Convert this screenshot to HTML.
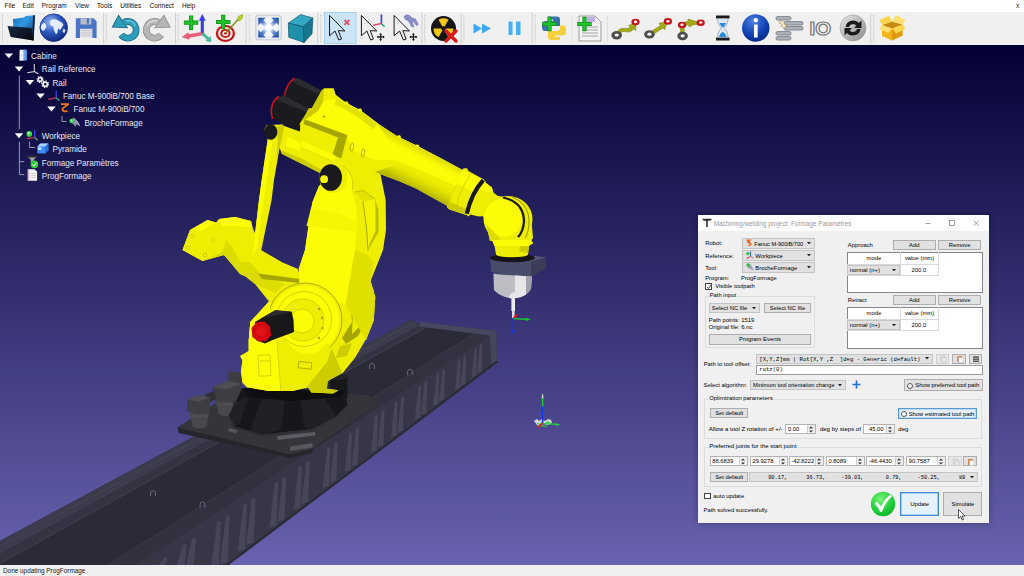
<!DOCTYPE html>
<html lang="en">
<head>
<meta charset="utf-8">
<title>RoboDK - Formage</title>
<style>
*{box-sizing:border-box;margin:0;padding:0}
html,body{width:1024px;height:576px;overflow:hidden;background:#f0f0f0;font-family:"Liberation Sans","DejaVu Sans",sans-serif;color:#111}
.abs{position:absolute}
#menubar{position:absolute;left:0;top:0;width:1024px;height:12px;background:#fff;font-size:6.55px;line-height:12px;color:#111;white-space:nowrap}
#menubar span{position:absolute;top:0}
#toolbar{position:absolute;left:0;top:12px;width:1024px;height:33px;background:#f0f0f0}
#toolbar svg{position:absolute;left:0;top:0}
#view{position:absolute;left:0;top:45px;width:1024px;height:520px;background:linear-gradient(#030134,#6862b0);overflow:hidden}
#status{position:absolute;left:0;top:565px;width:1024px;height:11px;background:#f0f0f0;font-size:6.4px;line-height:11px;color:#222;padding-left:3px;white-space:nowrap}
#tree{position:absolute;left:0;top:0;font-size:8.15px;color:#e8e8f4;white-space:nowrap}
#tree div{position:absolute;height:13px;line-height:13px}
#dlg{position:absolute;left:698px;top:170px;width:291px;height:307.5px;background:#f0f0f0;font-size:5.85px;color:#000;white-space:nowrap;box-shadow:0 0 6px rgba(0,0,20,.35)}
#dlg .title{position:absolute;left:0;top:0;width:291px;height:16px;background:#fff;color:#9a9a9a;font-size:6.42px;line-height:16px}
#dlg .ln{position:absolute;background:#dadada}
#dlg .arw{vertical-align:middle;position:relative;top:-.4px}
#dlg .combo span,#dlg .inp span{white-space:nowrap}
#dlg .t{position:absolute;line-height:9px}
#dlg .btn{position:absolute;background:#e1e1e1;border:1px solid #adadad;text-align:center}
#dlg .combo{position:absolute;background:#e1e1e1;border:1px solid #c4c4c4}
#dlg .inp{position:absolute;background:#fff;border:1px solid #b4b4b4}
#dlg .grp{position:absolute;border:1px solid #dcdcdc}
#dlg .mono{font-family:"Liberation Mono","DejaVu Sans Mono",monospace;font-size:5.6px}
</style>
</head>
<body>
<div id="menubar">
<span style="left:4.5px">File</span><span style="left:22.5px">Edit</span><span style="left:41.700px">Program</span><span style="left:75px">View</span><span style="left:97px">Tools</span><span style="left:120.200px">Utilities</span><span style="left:149.500px">Connect</span><span style="left:182px">Help</span><span style="left:1016px;font-size:6.5px">x</span>
</div>
<div id="toolbar"><svg width="1024" height="33" viewBox="0 12 1024 33">
<defs>
<radialGradient id="gGlobe" cx=".38" cy=".3" r=".8"><stop offset="0" stop-color="#9ab8f0"/><stop offset=".45" stop-color="#2f5cc0"/><stop offset="1" stop-color="#0a2070"/></radialGradient>
<radialGradient id="gInfo" cx=".4" cy=".25" r=".85"><stop offset="0" stop-color="#4a7ae0"/><stop offset=".6" stop-color="#1040b0"/><stop offset="1" stop-color="#06207a"/></radialGradient>
<linearGradient id="gFold" x1="0" y1="0" x2="1" y2="1"><stop offset="0" stop-color="#1a2a48"/><stop offset="1" stop-color="#05070c"/></linearGradient>
<linearGradient id="gSync" x1="0" y1="0" x2="1" y2="1"><stop offset="0" stop-color="#e8e8e8"/><stop offset="1" stop-color="#8a8a8a"/></linearGradient>
<g id="cur"><path d="M0,0V20.4L5.5,15.6L9.3,24.6L12,23.600L8.800,15.200L15.400,15.600Z" fill="none" stroke="#1a1a1a" stroke-width="1" stroke-linejoin="miter"/></g>
<g id="mv" stroke="#111" stroke-width="1.1" fill="#111"><path d="M-2.8,0H2.8M0,-2.8V2.8" fill="none"/><path d="M-4,0l1.700,-1.500v3zM4,0l-1.700,-1.500v3zM0,-4l-1.500,1.700h3zM0,4l-1.500,-1.700h3z" stroke="none"/></g>
<g id="plus"><path d="M0,-7.200V7.200M-7.200,0H7.200" stroke="#0e9416" stroke-width="4.200" fill="none"/><path d="M0,-6.600V6.600M-6.600,0H6.600" stroke="#22c02c" stroke-width="2.600" fill="none"/></g>
</defs>
<g fill="none" stroke="#b8b8b8" stroke-width="1" stroke-dasharray="1 1.2"><path d="M2.5,15V42"/><path d="M106.3,15V42"/><path d="M178.1,15V42"/><path d="M249.3,15V42"/><path d="M320.8,15V42"/><path d="M424.7,15V42"/><path d="M463.9,15V42"/><path d="M535.2,15V42"/><path d="M873.7,15V42"/></g>
<g fill="none" stroke="#d0d0d0" stroke-width="1"><path d="M103.6,13V44"/><path d="M175.5,13V44"/><path d="M246.1,13V44"/><path d="M317.7,13V44"/><path d="M422.0,13V44"/><path d="M461.1,13V44"/><path d="M532.2,13V44"/><path d="M870.7,13V44"/><path d="M572.2,15V42" stroke="#e2e2e2"/><path d="M607.6,15V42" stroke="#dcdcdc"/></g>
<!-- folder -->
<linearGradient id="gFb" x1="0" y1="0" x2="1" y2="1"><stop offset="0" stop-color="#1f6fc0"/><stop offset=".4" stop-color="#2f9ae0"/><stop offset="1" stop-color="#0a2a66"/></linearGradient>
<path d="M12.9,19.1L24,17.6L25.8,16.1L34.9,15.2L33.6,40.4L14,36Z" fill="url(#gFb)"/>
<path d="M33.2,15.4L34.9,15.2L33.6,40.4L32.2,40Z" fill="#0a1020"/>
<path d="M7.5,26L31.6,28L33.2,40.6L10.7,37Z" fill="url(#gFold)"/>
<!-- globe -->
<circle cx="53.7" cy="27.7" r="13.8" fill="url(#gGlobe)" stroke="#1a2f88" stroke-width=".8"/>
<path d="M50.5,20.5Q53,18.500 56.500,19.500L60,21.500Q63,22.500 63.500,25L62,27L60.500,30L58,28.500L57.500,32.500L56,34.500L54.500,31.500Q53,29 53.500,26.500L50.500,25.500Q49.500,23 50.500,20.500ZM41.500,24.500Q43,22.500 45,23L46.500,26.500L45,29.500L43,31L41,29Q40.500,27 41.500,24.500ZM63.500,28.500L65.500,30L64.500,33L62.500,32Z" fill="#f0f4ff" opacity=".93"/>
<!-- floppy -->
<path d="M75.800,18.200H93.500L96.600,21.300V38H75.800Z" fill="#4a74c4"/>
<path d="M80.500,18.600H91.300V24.500H80.500Z" fill="#b8bcc4"/><path d="M86.800,18.600H89V23.600H86.800Z" fill="#4a74c4"/>
<path d="M80,28.800H92.400V38H80Z" fill="#e4e4e8"/><path d="M80.500,30.500H92M80.500,32.300H92M80.500,34.100H92M80.500,35.900H92" stroke="#c0c0c6" stroke-width=".7"/>
<!-- undo -->
<g id="undo">
<path d="M124,22.500 A8.300,8.300 0 1 1 121.200,34.800" stroke="#1a6880" stroke-width="6.800" fill="none"/>
<path d="M118.500,14.600 L111.500,27.400 L128.400,28.200 Z" fill="#1a6880"/>
<path d="M124,22.500 A8.300,8.300 0 1 1 121.200,34.800" stroke="#2c9cba" stroke-width="5.200" fill="none"/>
<path d="M118.600,16.200 L112.800,26.700 L126.800,27.400 Z" fill="#2c9cba"/>
<path d="M125.500,21 A8.300,8.300 0 0 1 135.500,26" stroke="#6cc8dc" stroke-width="1.600" fill="none" opacity=".8"/>
</g>
<!-- redo -->
<g transform="translate(282.400,0) scale(-1,1)">
<path d="M124,22.500 A8.300,8.300 0 1 1 121.200,34.800" stroke="#8e8e8e" stroke-width="6.800" fill="none"/>
<path d="M118.500,14.600 L111.500,27.400 L128.400,28.200 Z" fill="#8e8e8e"/>
<path d="M124,22.500 A8.300,8.300 0 1 1 121.200,34.800" stroke="#b6b6b6" stroke-width="5.200" fill="none"/>
<path d="M118.600,16.200 L112.800,26.700 L126.800,27.400 Z" fill="#b6b6b6"/>
<path d="M125.500,21 A8.300,8.300 0 0 1 135.500,26" stroke="#dcdcdc" stroke-width="1.600" fill="none" opacity=".8"/>
</g>
<!-- add frame -->
<path d="M202.300,14.500 L205.300,20.500 H203.600 V33.400 H201 V20.500 H199.300 Z" fill="#3a3af0" stroke="#2020b0" stroke-width=".4"/>
<path d="M202.300,32.200 L188.500,34.600 L188.200,32.800 L182.400,37 L189.200,39.300 L188.900,37.400 L202.600,35 Z" fill="#f06078" stroke="#c03048" stroke-width=".4"/>
<path d="M201.500,34.300 L207.300,39.600 L206,40.800 L211,41.700 L210.300,36.600 L209,37.900 L203.300,32.600 Z" fill="#40c0a0" stroke="#208868" stroke-width=".4"/>
<use href="#plus" x="191.100" y="22.700"/>
<!-- add target -->
<ellipse cx="225.400" cy="33.400" rx="9.600" ry="8.500" fill="#c81414"/>
<ellipse cx="225.400" cy="33.400" rx="7.300" ry="6.400" fill="#f4eeee"/>
<ellipse cx="225.400" cy="33.400" rx="5.200" ry="4.500" fill="#d01818"/>
<ellipse cx="225.400" cy="33.400" rx="3.100" ry="2.700" fill="#f4eeee"/>
<ellipse cx="225.400" cy="33.400" rx="1.400" ry="1.200" fill="#c81414"/>
<path d="M226,32.800 L238.500,19" stroke="#7a8a18" stroke-width="1.300"/>
<path d="M237,19.200 Q238.500,15 243,14.600 Q243,19 239.300,21.300 Z" fill="#b8d020" stroke="#7a8a18" stroke-width=".4"/>
<use href="#plus" x="223.200" y="22"/>
<!-- fit all -->
<radialGradient id="gFit" cx=".5" cy=".5" r=".6"><stop offset="0" stop-color="#ffffff"/><stop offset="1" stop-color="#e2e7ee"/></radialGradient>
<radialGradient id="gFitA" gradientUnits="userSpaceOnUse" cx="268.500" cy="27.600" r="13"><stop offset=".25" stop-color="#dfe8f6"/><stop offset=".6" stop-color="#5f86cc"/><stop offset="1" stop-color="#1f4ea8"/></radialGradient>
<rect x="255.800" y="15.300" width="25.500" height="24.600" rx="2.500" fill="url(#gFit)" stroke="#bcc2cc" stroke-width=".8"/>
<g fill="url(#gFitA)"><path d="M258.300,17.800H265.800L263.400,20.200L267.300,24.100L264.600,26.800L260.700,22.900L258.300,25.300Z"/><path d="M278.800,17.800H271.300L273.700,20.200L269.800,24.100L272.500,26.800L276.400,22.900L278.800,25.300Z"/><path d="M258.300,37.400H265.800L263.400,35L267.300,31.100L264.600,28.400L260.700,32.300L258.300,29.900Z"/><path d="M278.800,37.400H271.300L273.700,35L269.800,31.100L272.500,28.400L276.400,32.300L278.800,29.900Z"/></g>
<!-- cube -->
<g stroke="#0e5468" stroke-width=".7" stroke-linejoin="round">
<path d="M288.300,23.200L300.600,14.600L312.900,18L303.300,26.700Z" fill="#34a8c2"/>
<path d="M288.300,23.200L303.300,26.700L304.100,42.500L288.800,37.200Z" fill="#1e90aa"/>
<path d="M303.300,26.700L312.900,18L312,33.700L304.100,42.500Z" fill="#15788e"/>
</g>
<!-- selected select tool -->
<rect x="324.500" y="12.500" width="31.500" height="31" fill="#cce4f7" stroke="#a8d0f0" stroke-width="1"/>
<use href="#cur" x="329.500" y="15.400"/>
<path d="M344.400,20L349.400,24.800M349.400,20L344.400,24.800" stroke="#e0506a" stroke-width="1.800"/>
<!-- move frame -->
<use href="#cur" x="361.400" y="15.400"/>
<path d="M381.400,14.500V23.600" stroke="#3a3ae0" stroke-width="1.600"/><path d="M381.400,23.600L373.200,25.200" stroke="#e04868" stroke-width="1.500"/><path d="M381.400,23.600L384.600,26.800" stroke="#20a878" stroke-width="1.600"/>
<use href="#mv" x="380.700" y="36.900"/>
<!-- move tool -->
<use href="#cur" x="394.100" y="15.400"/>
<path d="M404,16.500Q406,13.500 409.500,15.500L412,18L415.500,19L418.300,24.500L416.500,25.500L413.500,21.500L412.500,22.500L414,27L411.500,26.500L408.500,21Q404.500,20 404,16.500Z" fill="#8c8cc4" stroke="#6c6ca8" stroke-width=".5"/>
<use href="#mv" x="413.400" y="36.900"/>
<!-- collision -->
<circle cx="443.500" cy="28.500" r="12.500" fill="#161616"/>
<g fill="#f0c818"><path d="M443.500,28.500L438.500,19.800A10,10 0 0 1 448.500,19.800Z"/><path d="M443.500,28.500L453.500,28.500A10,10 0 0 1 448.500,37.200Z" /><path d="M443.500,28.500L438.500,37.200A10,10 0 0 1 433.500,28.500Z"/></g>
<circle cx="443.500" cy="28.500" r="2.200" fill="#161616"/>
<path d="M446,31L456,41M456,31L446,41" stroke="#d81a1a" stroke-width="3.400" stroke-linecap="round"/>
<!-- fast fwd -->
<path d="M473.500,23.500L482,28.500L473.500,33.500ZM482,23.500L491,28.500L482,33.500Z" fill="#3aa8f4"/>
<!-- pause -->
<path d="M508.500,21.500H512.500V35H508.500ZM516,21.500H520.500V35H516Z" fill="#48b0f4"/>
<!-- python -->
<path d="M548,16.500H557Q560,16.500 560,19.500V26H551Q548,26 548,29V31H545Q542,31 542,27V24Q542,21 546,21H553V19.500H548Z" fill="#3870a8"/>
<path d="M560,40H551Q548,40 548,37V31H557Q560,31 560,28V25.500H563Q566,25.500 566,29.500V32.500Q566,35.500 562,35.500H555V37H560Z" fill="#f4d03c"/>
<use href="#plus" x="549.500" y="24"/>
<!-- add program -->
<path d="M579,16H595L601,22V41H579Z" fill="#f4f4f4" stroke="#8a8a8a" stroke-width=".8"/>
<path d="M587,17H595V22H587Z" fill="#c0b0e8"/>
<path d="M582,27H598M582,30H598M582,33H598M582,36H598" stroke="#9a9a9a" stroke-width=".9"/>
<use href="#plus" x="584.500" y="24"/>
<!-- move J / L / C -->
<path d="M616,33.500 Q619,27.500 624.500,28.300 Q628.500,29.500 630.300,26.800 L628.600,25.500 L636,22.800 L635.800,30.500 L633.700,29 Q630.500,33.300 625,31.600 Q621,30.700 619.300,35 Z" fill="#a2aa18" stroke="#747a0c" stroke-width=".5"/>
<ellipse cx="616.7" cy="35.2" rx="5.300" ry="4.200" fill="#4e4e4e"/><ellipse cx="616.7" cy="35" rx="2.100" ry="1.600" fill="#f4f4f4"/><ellipse cx="635.5" cy="22.1" rx="4.100" ry="3.300" fill="#c01820"/><ellipse cx="635.5" cy="21.9" rx="1.700" ry="1.300" fill="#fbeaea"/>
<path d="M650.500,31.800 L660.500,25.600 L659,23.300 L667.500,21.500 L664.600,29.800 L662.800,28 L652.500,34.800 Z" fill="#a2aa18" stroke="#747a0c" stroke-width=".5"/>
<ellipse cx="649.4" cy="34.4" rx="5.300" ry="4.200" fill="#4e4e4e"/><ellipse cx="649.4" cy="34.2" rx="2.100" ry="1.600" fill="#f4f4f4"/><ellipse cx="667.9" cy="21.4" rx="4.100" ry="3.300" fill="#c01820"/><ellipse cx="667.9" cy="21.2" rx="1.700" ry="1.300" fill="#fbeaea"/>
<path d="M680.500,34 L680.300,26 Q682,22.500 688,21.300 L688,19 L694.500,21 L697.500,21.600 L700,24.300 L694,24.500 L689,27 L688.700,24.600 Q684.500,25.500 684,28 L684.500,34 Z" fill="#a2aa18" stroke="#747a0c" stroke-width=".5"/>
<ellipse cx="682.6" cy="36" rx="5.300" ry="4.200" fill="#4e4e4e"/><ellipse cx="682.6" cy="35.8" rx="2.100" ry="1.600" fill="#f4f4f4"/><ellipse cx="682" cy="25" rx="4.100" ry="3.300" fill="#c01820"/><ellipse cx="682" cy="24.8" rx="1.700" ry="1.300" fill="#fbeaea"/><ellipse cx="700.7" cy="22.7" rx="4.100" ry="3.300" fill="#c01820"/><ellipse cx="700.7" cy="22.5" rx="1.700" ry="1.300" fill="#fbeaea"/>
<!-- hourglass -->
<path d="M716,15.500H729.500V18.500H716ZM716,37.500H729.500V40.500H716Z" fill="#1c1c1c"/>
<path d="M717.500,18.500H728Q728,25 723.800,28Q728,31 728,37.500H717.500Q717.500,31 721.700,28Q717.500,25 717.500,18.500Z" fill="#dce8f4" stroke="#7a8a9a" stroke-width=".6"/>
<path d="M719.500,23H726Q725,26 722.800,27.500Q720.500,26 719.500,23ZM719,37Q720,33 722.800,32Q725.500,33 726.500,37Z" fill="#2a8ad8"/>
<!-- info -->
<circle cx="755.750" cy="28" r="13.700" fill="url(#gInfo)"/>
<circle cx="755.800" cy="20.300" r="2.200" fill="#fff"/><path d="M754,24.500H757.700V37.500H754Z" fill="#fff"/>
<!-- speed bars -->
<g fill="#aab0b8" stroke="#6a7078" stroke-width=".7"><rect x="776" y="16.500" width="15" height="3.600" rx="1.600"/><rect x="784" y="21.500" width="19" height="3.600" rx="1.600"/><rect x="784" y="26.500" width="19" height="3.600" rx="1.600"/><rect x="776" y="31.500" width="15" height="3.600" rx="1.600"/><rect x="776" y="36.500" width="15" height="3.600" rx="1.600"/></g>
<path d="M779,21.500Q784,20 785,25L787,24L784.500,28.500L780.500,26L782.500,25.500Q782,23 779,23.500Z" fill="#f4e8c0" stroke="#8a7a40" stroke-width=".4"/>
<!-- IO -->
<text x="809.500" y="35" font-family="Liberation Sans, sans-serif" font-size="18.500" font-weight="bold" fill="#fff" stroke="#777" stroke-width="1.2" textLength="21.500" lengthAdjust="spacingAndGlyphs">IO</text>
<!-- sync -->
<circle cx="853" cy="28" r="13" fill="url(#gSync)" stroke="#9a9a9a" stroke-width=".6"/>
<path d="M845.500,27Q846.500,20.500 853.500,20.500Q857,20.500 859,23L861.500,20.500V28H854L856.500,25.500Q855,24 853,24Q849.500,24.500 849,27Z" fill="#1a1a1a"/>
<path d="M860.500,29Q859.500,35.500 852.500,35.500Q849,35.500 847,33L844.500,35.500V28H852L849.500,30.500Q851,32 853,32Q856.500,31.500 857,29Z" fill="#1a1a1a"/>
<!-- yellow box -->
<path d="M882,25L892,28.500L902.500,24.500V35.500L892,40.500L882,36Z" fill="#f2b41c"/>
<path d="M892,28.500L902.500,24.500V35.500L892,40.500Z" fill="#e09a10"/>
<path d="M882,25L892,21.500L902.500,24.500L892,28.500Z" fill="#c88a10"/>
<path d="M882,25L879.500,20L889,15.500L892,21.500Z" fill="#fad44a"/><path d="M902.500,24.500L905.500,20L896,15L892,21.500Z" fill="#fce070"/>
<path d="M882,25L879,29L888.500,33L892,28.500Z" fill="#fce070"/><path d="M902.500,24.500L905.500,29L896,33.500L892,28.500Z" fill="#fad44a"/>
</svg>
</div>
<div id="view">
<svg width="1024" height="520" viewBox="0 45 1024 520" style="position:absolute;left:0;top:0" shape-rendering="geometricPrecision">
<polygon points="0,541 411.8,319.5 414,321.5 417.7,325.4 418.9,321.8 496.2,330.7 497.4,361.4 227,565 0,565" fill="#363646" />
<polygon points="0,541 411.8,319.5 417.7,325.4 419.5,326.6 489,335.4 135,565 0,565" fill="#2b2b38" />
<polygon points="0,541 411.8,319.5 417.7,325.4 0,552.5" fill="#3b3b4b" />
<polygon points="0,552.5 417.7,325.4 426,327.4 0,563.5" fill="#333342" />
<path d="M0,552.5 L417.7,325.4 M0,563.5 L426,327.4 M0,546.5 L414.5,322.5" stroke="#474758" stroke-width=".7" fill="none"/>
<polygon points="474,333.5 489,335.4 135,565 108,565" fill="#31313f" />
<path d="M474,333.5 L108,565" stroke="#41414f" stroke-width=".6" fill="none"/>
<polygon points="418.9,321.8 496.2,330.7 489.7,335.6 419.5,326.6" fill="#474860" />
<polygon points="489.7,335.6 496.2,330.7 497.4,361.4 491.5,365.5" fill="#45465c" />
<path d="M479.756,345.801 Q481,342.801 482.244,345.101 L481.68,371.443 L476.96,373.843 Z" fill="#464658"/>
<path d="M474.431,349.387 Q475.688,346.387 476.946,348.687 L476.355,375.44 L471.569,377.84 Z" fill="#464658"/>
<path d="M463.529,356.729 Q464.813,353.729 466.098,356.029 L465.452,383.625 L460.53,386.025 Z" fill="#464658"/>
<path d="M457.978,360.468 Q459.276,357.468 460.574,359.768 L459.9,387.792 L454.91,390.192 Z" fill="#464658"/>
<path d="M442.282,371.038 Q443.619,368.038 444.956,370.338 L444.204,399.576 L439.018,401.976 Z" fill="#464658"/>
<path d="M436.434,374.976 Q437.786,371.976 439.137,374.276 L438.356,403.966 L433.098,406.366 Z" fill="#464658"/>
<path d="M424.461,383.039 Q425.843,380.039 427.224,382.339 L426.382,412.954 L420.975,415.354 Z" fill="#464658"/>
<path d="M418.365,387.145 Q419.761,384.145 421.158,386.445 L420.285,417.531 L414.803,419.931 Z" fill="#464658"/>
<path d="M401.128,398.753 Q402.567,395.753 404.006,398.053 L403.047,430.471 L397.351,432.871 Z" fill="#464658"/>
<path d="M394.706,403.078 Q396.161,400.078 397.616,402.378 L396.625,435.292 L390.848,437.692 Z" fill="#464658"/>
<path d="M381.557,411.933 Q383.045,408.933 384.533,411.233 L383.476,445.164 L377.536,447.564 Z" fill="#464658"/>
<path d="M374.862,416.442 Q376.366,413.442 377.871,415.742 L376.78,450.19 L370.757,452.59 Z" fill="#464658"/>
<path d="M355.932,429.19 Q357.484,426.19 359.035,428.49 L357.849,464.401 L351.591,466.801 Z" fill="#464658"/>
<path d="M348.879,433.94 Q350.448,430.94 352.017,433.24 L350.796,469.696 L344.45,472.096 Z" fill="#464658"/>
<path d="M334.439,443.664 Q336.044,440.664 337.649,442.964 L336.355,480.536 L329.83,482.936 Z" fill="#464658"/>
<path d="M327.086,448.616 Q328.71,445.616 330.333,447.916 L329.002,486.056 L322.385,488.456 Z" fill="#464658"/>
<path d="M306.297,462.616 Q307.972,459.616 309.647,461.916 L308.212,501.663 L301.337,504.063 Z" fill="#464658"/>
<path d="M298.552,467.832 Q300.246,464.832 301.94,467.132 L300.466,507.478 L293.495,509.878 Z" fill="#464658"/>
<path d="M282.694,478.512 Q284.427,475.512 286.161,477.812 L284.607,519.383 L277.439,521.783 Z" fill="#464658"/>
<path d="M274.619,483.95 Q276.373,480.95 278.126,483.25 L276.532,525.445 L269.263,527.845 Z" fill="#464658"/>
<path d="M251.788,499.325 Q253.599,496.325 255.409,498.625 L253.7,542.585 L246.148,544.985 Z" fill="#464658"/>
<path d="M243.282,505.053 Q245.114,502.053 246.946,504.353 L245.194,548.971 L237.536,551.371 Z" fill="#464658"/>
<path d="M225.867,516.782 Q227.742,513.782 229.617,516.082 L227.777,562.045 L219.903,564.445 Z" fill="#464658"/>
<path d="M216.999,522.754 Q218.896,519.754 220.793,522.054 L218.909,565.2 L210.924,567.6 Z" fill="#464658"/>
<path d="M191.926,539.639 Q193.885,536.639 195.845,538.939 L193.835,565.2 L185.539,567.6 Z" fill="#464658"/>
<path d="M182.585,545.93 Q184.567,542.93 186.55,545.23 L184.493,565.2 L176.081,567.6 Z" fill="#464658"/>
<path d="M163.459,558.81 Q165.489,555.81 167.519,558.11 L165.366,565.2 L156.716,567.6 Z" fill="#464658"/>
<path d="M153.72,565.369 Q155.774,562.369 157.829,564.669 L155.627,565.2 L146.856,567.6 Z" fill="#464658"/>
<path d="M126.185,583.912 Q128.308,580.912 130.43,583.212 L128.091,565.2 L118.977,567.6 Z" fill="#464658"/>
<path d="M497.4,361.4 L227,565" stroke="#2a2a36" stroke-width="2" fill="none"/>
<path d="M369.6,369 v-3.2 a2.4,2.4 0 0 1 4.8,0 v3.2" fill="none" stroke="#68687a" stroke-width="1"/>
<path d="M407.6,375 v-3.2 a2.4,2.4 0 0 1 4.8,0 v3.2" fill="none" stroke="#68687a" stroke-width="1"/>
<path d="M150.6,496.25 v-3.2 a2.4,2.4 0 0 1 4.8,0 v3.2" fill="none" stroke="#68687a" stroke-width="1"/>
<path d="M200.1,507.5 v-3.2 a2.4,2.4 0 0 1 4.8,0 v3.2" fill="none" stroke="#68687a" stroke-width="1"/>
<polygon points="177.5,427.5 240,388 367.5,395 380,402.5 312.5,450 312.5,453 290,458 178.75,433" fill="#25252b" />
<polygon points="177.5,427.5 240,388 367.5,395 380,402.5 312.5,449 290,454.5" fill="#34343b" />
<polygon points="277.5,436 315,432 315,435.5 277.5,440" fill="#5c5c64" />
<polygon points="290,446.5 312.5,443 312.5,447.5 290,451" fill="#56565e" />
<polygon points="229,428 238,430.5 236,433.5 228,431" fill="#56565e" />
<polygon points="228.3,373 232,371 240,372.5 242,376 242,386 228.3,384" fill="#3d3d42" />
<polygon points="216.2,401 233.2,400 230.75,413.7 218.6,413.7" fill="#47474c" />
<ellipse cx="224.7" cy="413.7" rx="6.1" ry="2.2" fill="#47474c"/>
<path d="M216.5,404.500 H233" stroke="#5a5a60" stroke-width="1.6" stroke-dasharray="1 1"/>
<polygon points="212.5,387 228.3,381 241.7,383.4 243,396 232,402 215,401.6" fill="#3d3d42" />
<polygon points="212.5,387 228.3,381 241.7,383.4 226,389.5" fill="#4e4e54" />
<polygon points="205,394.5 214,391 216,399 209,403" fill="#2f2f34" />
<polygon points="189.4,412.5 208.9,412 206.5,425.9 192.5,425.9" fill="#47474c" />
<ellipse cx="199.500" cy="425.9" rx="7" ry="2.5" fill="#47474c"/>
<path d="M190,416 H208.500" stroke="#5a5a60" stroke-width="1.6" stroke-dasharray="1 1"/>
<polygon points="187,399.2 199.2,394.9 210.1,397.3 210.1,412.5 200,414 187,411.3" fill="#3d3d42" />
<polygon points="187,399.2 199.2,394.9 210.1,397.3 198,402" fill="#4e4e54" />
<polygon points="330,377.5 338,374 347.5,375.5 347.5,398 338,401 330,398" fill="#17171b" />
<ellipse cx="339" cy="377" rx="8.7" ry="3" fill="#222228"/>
<polygon points="242,388 345,391 347.5,405 336,416 312,429 262,434.5 233,426.5 229,415 236,402" fill="#17171b" />
<polygon points="262,398 285,400 281,430 262,434.5 250,431" fill="#202026" />
<polygon points="300,399 322,395 336,416 312,429 305,428" fill="#202026" />
<polygon points="236,402 248,397 240,424 233,426.5 229,415" fill="#202026" />
<polygon points="242,388 345,391 340,397 290,401 250,397" fill="#0e0e11" />
<path d="M231,420 L234,427 L262,435.5 L312,430 L337,417 L347,406" stroke="#2e2e35" stroke-width="1.6" fill="none"/>
<polygon points="269,301.5 250.3,322 248.75,340 248.75,351 240.2,356 242.5,360.6 241,371.5 242.5,382.5 247.2,387.2 269,391 292.5,391 308,387.2 311.25,392.6 333,393.4 338.6,390.3 326.9,388.75 327.7,381 342.5,373 355,357.5 366,338.75 373.75,320 374,290 300,270" fill="#eeee02" />
<polygon points="269,301.5 250.3,322 248.75,340 248.75,351 240.2,356 242.5,360.6 241,371.5 242.5,382.5 247.2,387.2 269,391 280.8,391 276.9,340.3 285,320" fill="#fcfc06" />
<polygon points="331.5,348 342.5,373 327.7,381 326.9,388.75 338.6,390.3 333,393.4 311.25,392.6 308,387.2 305,388.75 326.9,362" fill="#cccc00" />
<polygon points="340,300 374,290 373.75,320 366,338.75 355,357.5 342.5,373 331.5,348 343,325" fill="#eeee02" />
<polygon points="350,303 369,298 368,318 358,336 346,344 342,338 352,322" fill="#a6a600" />
<polygon points="353,310 365,306 362,324 352,334" fill="#eeee02" />
<polygon points="340,346 352,343 347,356 336,358" fill="#cccc00" />
<polygon points="182.5,250 190,230 207.5,220 216,222.5 219,219 235,217 251,221 252.5,227.5 258,240 261,250 282.5,262.5 298,269 300,290 269,301.5 255,284 245.6,276.5 240,274 232.5,265 224,255 202.5,261" fill="#eeee02" />
<polygon points="190,230 207.5,220 216,222.5 200,232" fill="#fcfc06" />
<polygon points="219,219 235,217 251,221 252.5,227.5 236,226 222,226" fill="#fcfc06" />
<polygon points="182.5,250 190,230 200,232 216,222.5 222,226 226,240 222,252 202.5,261" fill="#eeee02" />
<polygon points="202.5,261 222,252 226,240 232,246 240,262 232.5,265 224,255" fill="#dcdc00" />
<polygon points="240,262 250,262 262,276 285,284 275,293 255,284 245.6,276.5 240,274 232.5,265" fill="#dcdc00" />
<polygon points="258,273.5 300,279 299,283 262,279" fill="#a6a600" />
<circle cx="192" cy="236" r="1.6" fill="#fcfc06" stroke="#a6a600" stroke-width=".5"/>
<circle cx="188" cy="248" r="1.6" fill="#fcfc06" stroke="#a6a600" stroke-width=".5"/>
<circle cx="213" cy="240" r="1.6" fill="#fcfc06" stroke="#a6a600" stroke-width=".5"/>
<circle cx="205" cy="255" r="1.6" fill="#fcfc06" stroke="#a6a600" stroke-width=".5"/>
<polygon points="319,186 312.6,201.7 310.5,212 305,250 298.75,268.75 300,290 330,300 345.6,304.7 366,340 373.75,320 375.3,297 370.6,281 383,250 386,230 385.7,200 380,172 350,168" fill="#eeee02" />
<polygon points="319,186 312.6,201.7 310.5,212 305,250 298.75,268.75 300,290 330,300 345.6,304.7 355,250 357,222 356,205 349,182.5 335,172" fill="#fcfc06" />
<polygon points="311,208 340,214 357,222 356.5,232 306.5,226" fill="#f6f604" />
<polygon points="363,201.7 375,199 378.5,210 378.5,232 368,250.5 366.5,228" fill="#f4f400" />
<polygon points="375,199 378.5,210 378.5,232 368,250.5 369.5,244 375.5,231 375.5,211" fill="#bcbc00" />
<path d="M363,201.7 L366.5,228 L368,250.5" stroke="#a8a800" stroke-width="1" fill="none"/>
<polygon points="354.5,192 363,190.5 375,199 363,201.7" fill="#e2e200" />
<path d="M354.5,192 L363,190.5 L375,199" stroke="#b4b400" stroke-width=".8" fill="none"/>
<polygon points="345.6,304.7 355,250 367.5,255 374,262 370.6,281 375.3,297 373.75,320 366,340" fill="#e0e000" />
<circle cx="305" cy="320" r="37" fill="#eeee02" stroke="#a6a600" stroke-width=".9"/>
<circle cx="305" cy="320" r="34.5" fill="#fcfc06"/>
<circle cx="304" cy="319" r="27.5" fill="#fcfc06" stroke="#cccc00" stroke-width=".9"/>
<circle cx="303" cy="320" r="21" fill="#eeee02" stroke="#cccc00" stroke-width=".8"/>
<circle cx="302" cy="321" r="12" fill="#fcfc06" stroke="#cccc00" stroke-width=".8"/>
<polygon points="269,301.5 250.3,322 248.75,340 248.75,351 247,370 262,375 276.9,360 276.9,340.3 272,320" fill="#fcfc06" />
<polygon points="276.9,340.3 283,337 293,349 305,354.4 318,352 327,343 331.5,348 326.9,362 305,388.75 308,387.2 292.5,391 280.8,391" fill="#eeee02" />
<path d="M276.9,340.3 L280.8,390.5" stroke="#cccc00" stroke-width=".7"/>
<circle cx="319" cy="309" r="1.2" fill="#a6a600"/>
<circle cx="322" cy="318" r="1.2" fill="#a6a600"/>
<circle cx="322.5" cy="328" r="1.2" fill="#a6a600"/>
<circle cx="319" cy="338" r="1.2" fill="#a6a600"/>
<polygon points="255,322 260.5,318.75 275.3,310.2 291.7,311.7 293.5,320 294,332 272,340.3 265,343.4 256,340" fill="#18181b" />
<polygon points="260.5,318.75 275.3,310.2 291.7,311.7 278,315" fill="#2a2a2e" />
<polygon points="257,322 264,321.5 270,326.5 271,335.5 266,341 258.5,341.5 252.5,337 251.5,328" fill="#d20a10" />
<circle cx="261" cy="331.5" r="5" fill="#e0141a"/>
<rect x="258.5" y="355" width="12" height="21" fill="none" stroke="#cccc00" stroke-width=".8" transform="rotate(-3 264 365)"/>
<path d="M260,361 H270" stroke="#a6a600" stroke-width="1.2" stroke-dasharray="1.2 1.2"/>
<rect x="298.5" y="362" width="13" height="6.500" fill="none" stroke="#a6a600" stroke-width=".8" transform="rotate(6 305 365)"/>
<polygon points="293.5,78.7 298.5,78.3 321.6,90.6 312,108 308.5,108.75 284.75,95.6 287,86" fill="#1b1b1f" />
<polygon points="293.5,78.7 298.5,78.3 321.6,90.6 318,94 292,82" fill="#2b2b30" />
<path d="M294.5,78.2 Q286,84 284.5,96" stroke="#d0121a" stroke-width="1.6" fill="none"/>
<polygon points="277.9,96.9 284.75,95.6 308.5,108.75 306,113.75 299,125 301,131.9 272.9,118.75 269.9,111" fill="#1b1b1f" />
<polygon points="277.9,96.9 284.75,95.6 308.5,108.75 306,112 277,100" fill="#2b2b30" />
<path d="M278.5,96.5 Q268.5,104 272.5,119" stroke="#d0121a" stroke-width="1.6" fill="none"/>
<polygon points="280,124.6 301.25,131.9 300.5,146.7 334,161.5 322,174 281.7,153.8 279,146" fill="#eeee02" />
<polygon points="287.2,136.6 301.25,142.8 300.5,151 286,146" fill="#fcfc06" />
<polygon points="281.7,150.6 300.5,158 322,170 322,174 281.7,153.8" fill="#cccc00" />
<polygon points="264.5,129 267,125 282.5,124.6 284.3,127 279.4,149 274,180 271.6,200 261.3,250 256,267 252.5,255 259,200 261.7,180 267.7,139.7" fill="#eeee02" />
<polygon points="267.7,139.7 272.5,141 266.5,180 263.8,200 256.5,250 252.5,255 259,200 261.7,180" fill="#fcfc06" />
<polygon points="276,127 282.5,124.6 284.3,127 279.4,149 276.5,160 278,140" fill="#cccc00" />
<polygon points="321.6,90.6 324,88.6 333.5,88.6 335.4,94.4 345,102 347.5,101.5 349,104.5 358,109 360.5,108.5 362,111.5 380,125 396.6,136 417.5,146 462.5,170 447.5,206 416,188.5 400,181.5 374.75,172 365,176.5 351,181 346,171 341.2,158.4 334,161.5 300.5,146.7 299.75,135 300.4,123.75 299,125 306,113.75 308.5,108.75 312,108" fill="#eeee02" />
<polygon points="323.5,101 336,98 345,102 360,110 380,125 396.6,136 417.5,146 462.5,170 456,186 420,170 395,160 375,160 352,150 346.6,135 305,120" fill="#fcfc06" />
<polygon points="321.6,90.6 324,88.6 323.5,101 318,111 305,120 299,125 306,113.75 308.5,108.75 312,108" fill="#cccc00" />
<polygon points="324,88.6 333.5,88.6 335.4,94.4 336,98 323.5,101" fill="#eeee02" />
<defs><linearGradient id="gTop" gradientUnits="userSpaceOnUse" x1="430" y1="152.5" x2="425.5" y2="161.5"><stop offset="0" stop-color="#d8d800" stop-opacity="1"/><stop offset="1" stop-color="#e8e800" stop-opacity="0"/></linearGradient><linearGradient id="gBot" gradientUnits="userSpaceOnUse" x1="416" y1="188.5" x2="423" y2="174.500"><stop offset="0" stop-color="#b8b800" stop-opacity="1"/><stop offset="1" stop-color="#dcdc00" stop-opacity="0"/></linearGradient></defs>
<polygon points="336,98 345.6,103.3 359.7,110.3 376.9,123.6 373.5,129.5 356,115.5 343,108.5 334.5,104.5" fill="#e2e200" />
<polygon points="376.9,123.6 398.75,136.9 417.5,146.25 439.4,157.2 462.5,170 457,184 430,170 405,156 392,145" fill="url(#gTop)" />
<polygon points="374.75,172 400,181.5 416,188.5 447.5,206 455,188 420,170 398,164" fill="url(#gBot)" />
<ellipse cx="345.9" cy="103.2" rx="2" ry="1.600" fill="#eeee02"/>
<ellipse cx="345.6" cy="102.9" rx="1.300" ry="1" fill="#fcfc06"/>
<ellipse cx="360" cy="110.2" rx="2" ry="1.600" fill="#eeee02"/>
<ellipse cx="359.7" cy="109.9" rx="1.300" ry="1" fill="#fcfc06"/>
<ellipse cx="399.05" cy="136.9" rx="2" ry="1.600" fill="#eeee02"/>
<ellipse cx="398.75" cy="136.6" rx="1.300" ry="1" fill="#fcfc06"/>
<ellipse cx="417.3" cy="146.1" rx="2" ry="1.600" fill="#eeee02"/>
<ellipse cx="417" cy="145.8" rx="1.300" ry="1" fill="#fcfc06"/>
<polygon points="302.9,120.2 306.6,120 347.25,135 341.2,158.4 334,161.5 300.5,146.7 300.4,123.75" fill="#eeee02" />
<polygon points="304,120.5 306.6,120 347.25,135 346.3,139 338,137.5 303.5,124" fill="#a6a600" />
<polygon points="338,137.5 346.3,139 341.2,158.4 336,156.2 332.6,154.5" fill="#a6a600" />
<polygon points="300.9,140.5 332.6,154.5 336,156.2 334,161.5 300.5,146.7" fill="#fcfc06" />
<ellipse cx="352" cy="147" rx="1.6" ry="4.2" fill="none" stroke="#a6a600" stroke-width=".8" transform="rotate(8 352 147)"/>
<ellipse cx="363" cy="153" rx="1.6" ry="4.2" fill="none" stroke="#a6a600" stroke-width=".8" transform="rotate(8 363 153)"/>
<circle cx="324" cy="116.5" r="1" fill="#8c8c00"/>
<ellipse cx="270.8" cy="132" rx="6.5" ry="7.8" fill="#1a1a1e"/>
<polygon points="333,161 341.2,158 352,172 340,170 332,165" fill="#eeee02" />
<polygon points="330.2,163.1 335.6,163.3 342.5,165.8 348.1,170.5 351.7,176.8 353,184 352.3,189.4 340,196 320,184 322,171" fill="#fcfc06" />
<path d="M330.2,163.1 L335.6,163.3 L342.5,165.8 L348.1,170.5 L351.7,176.8 L353,184 L352.3,189.4" fill="none" stroke="#cccc00" stroke-width="1"/>
<ellipse cx="333.500" cy="177.500" rx="14" ry="15.5" fill="#eeee02"/>
<ellipse cx="330.7" cy="177.5" rx="11.3" ry="13.3" fill="#1a1a1e"/>
<circle cx="324.1" cy="179.2" r="3.9" fill="#fcfc06"/>
<polygon points="461.9,170.6 463.5,168.3 467,168.3 468.5,171 483.75,179.4 486,182 478,200 469,216.5 466.25,215 449.5,209.5 447,207.5 447.5,205.6" fill="#eeee02" />
<polygon points="461.9,170.6 483.75,179.4 477,193 456.5,184" fill="#fcfc06" />
<polygon points="449,201.5 470,210.5 466.25,215 449.5,209.5 447,207.5" fill="#cccc00" />
<path d="M470.500,174 Q461,188 456.500,206" stroke="#cccc00" stroke-width=".8" fill="none"/>
<polygon points="484,181.5 491.9,187.5 494.5,196 490,208 481,216.5 477.5,216.25 468,214" fill="#eeee02" />
<polygon points="484,181.5 491.9,187.5 493,193 480,190" fill="#fcfc06" />
<path d="M483.300,180.200 Q471.500,193 466.800,213.800" stroke="#1a1a1e" stroke-width="4.200" fill="none"/>
<polygon points="490,190 498,196 506,197 495,228 480,214" fill="#eeee02" />
<ellipse cx="508" cy="219" rx="24.5" ry="23" fill="#eeee02"/>
<polygon points="486,222 531,215 533,238 531,241 490,241" fill="#eeee02" />
<ellipse cx="503" cy="218" rx="19" ry="19" fill="#fcfc06"/>
<polygon points="486,224 500,238 498,241 490,241" fill="#dcdc00" />
<path d="M503,197.5 Q524,202 524,222 Q523,232 518,237" stroke="#1a1a1e" stroke-width="2.300" fill="none"/>
<path d="M512,197 Q530,204 529,224 Q528,234 525,238" stroke="#a6a600" stroke-width="1.2" fill="none"/>
<polygon points="492,240 531,240 533,243 529,246 528,254 496,254 494.5,246" fill="#eeee02" />
<polygon points="492,240 531,240 533,243 529,246 494.5,246" fill="#fcfc06" />
<polygon points="520,246 529,246 528,254 519,254" fill="#cccc00" />
<ellipse cx="512" cy="254" rx="16" ry="2.6" fill="#eeee02"/>
<polygon points="490.3,259 512,262 535,260.5 546,257.3 545.5,268.5 531,276.5 500,274.5 491,271.5" fill="#4a4c6c" />
<polygon points="531,261.5 546,257.3 545.5,268.5 531,276.5" fill="#3a3c58" />
<polygon points="490.3,259 512,262 531,261.5 546,257.3 535,256 512.6,261.4 492,258" fill="#565878" />
<ellipse cx="512.6" cy="258" rx="22.4" ry="4.2" fill="#15151a"/>
<ellipse cx="512" cy="254.6" rx="16" ry="2.6" fill="#eeee02"/>
<path d="M493.4,273.5 L494,290 Q500,297 512.5,298.5 Q526,297 531,289 L532,276.5 L500,274.5 Z" fill="#bdbdc4"/>
<path d="M515,275.5 L515,292 Q509,293 509,298 L512.5,298.5 Q522,298 526,294.5 L526,276.2 Z" fill="#e6e6ea"/>
<path d="M526,276.2 L526,294.5 Q529.5,292 531,289 L532,276.5 Z" fill="#a2a2ac"/>
<rect x="511.4" y="298" width="3.6" height="13" fill="#ececf0"/>
<rect x="512" y="310" width="2.6" height="8" fill="#dcdce4"/>
<line x1="513.3" y1="318" x2="513.3" y2="330.38" stroke="#1133ee" stroke-width="1.4"/><polygon points="513.3,335.5 511.7,330.38 514.9,330.38" fill="#1133ee" />
<line x1="513.3" y1="318.6" x2="525.888" y2="319.311" stroke="#18c830" stroke-width="1.4"/><polygon points="531,319.6 525.798,320.909 525.978,317.714" fill="#18c830" />
<line x1="513.3" y1="318" x2="515.354" y2="316.222" stroke="#e01818" stroke-width="1.6"/><polygon points="518.5,313.5 516.205,317.205 514.504,315.239" fill="#e01818" />
<path d="M534,421 l3,-2 l2,2 l3,-2 l3,2 l3,-2 l3,1 l1,3 l-4,2 l-5,-1 l-5,2 z" fill="#e8e8e8" opacity=".9"/>
<path d="M537,423 l3,1.500 l2,-2 M545,424 l3,-2.500 l2.500,2 M539,426.500 l4,-1 l4,1.500" stroke="#30d048" stroke-width="1.100" fill="none"/>
<line x1="542.6" y1="423" x2="542.6" y2="398.8" stroke="#20d040" stroke-width="1.3"/><polygon points="542.6,394 544.1,398.8 541.1,398.8" fill="#20d040" />
<line x1="542.6" y1="394" x2="542.6" y2="398" stroke="#dddddd" stroke-width="1"/>
<line x1="542.6" y1="423" x2="542.6" y2="410.62" stroke="#1133ee" stroke-width="1.5"/><polygon points="542.6,405.5 544.2,410.62 541,410.62" fill="#1133ee" />
<line x1="542.6" y1="423.3" x2="555.717" y2="424.399" stroke="#20d040" stroke-width="1.3"/><polygon points="560.5,424.8 555.592,425.894 555.842,422.904" fill="#20d040" />
<line x1="542.6" y1="423" x2="540.048" y2="425.369" stroke="#e01818" stroke-width="1.6"/><polygon points="537,428.2 539.164,424.417 540.933,426.322" fill="#e01818" />
</svg>
<div id="tree"><svg width="200" height="150" viewBox="0 45 200 150" style="position:absolute;left:0;top:0">
<g stroke="#9a9aa8" stroke-width="1" fill="none">
<path d="M19.300,75.500 V129"/>
<path d="M19.400,141.800 V174.600 H24.200 M19.400,161.700 H24.200"/>
<path d="M29.600,141.800 V147.500 H35"/>
<path d="M62,116 V121.500 H66.500"/>
</g>
<polygon points="4.7,53.4 13.1,53.4 8.9,58.3" fill="#fff"/>
<polygon points="14.8,66.6 23.2,66.6 19,71.5" fill="#fff"/>
<polygon points="25.7,80 34.1,80 29.9,84.9" fill="#fff"/>
<polygon points="36.4,93.5 44.8,93.5 40.6,98.4" fill="#fff"/>
<polygon points="47.3,106.6 55.7,106.6 51.5,111.5" fill="#fff"/>
<polygon points="14.8,133.3 23.2,133.3 19,138.2" fill="#fff"/>
<defs><linearGradient id="gcab" x1="0" x2="1"><stop offset="0" stop-color="#f4f8ff"/><stop offset=".45" stop-color="#dbe8fa"/><stop offset=".6" stop-color="#7ab0ee"/><stop offset="1" stop-color="#3f84dc"/></linearGradient></defs><path d="M19.6,50.600 Q19.600,49.700 20.500,49.700 L26.200,49.500 Q27,49.500 27,50.400 L27,59.800 Q27,60.600 26.200,60.600 L19.400,60.800 Z" fill="url(#gcab)"/>
<g stroke="#d8d8d8" stroke-width="1.1" fill="none"><path d="M34.300,64 V71.500 L27.200,72.800"/><path d="M34.300,71.500 L38.200,73.800"/></g>
<g fill="none" stroke="#f2f2f2"><circle cx="40.1" cy="79.5" r="1.900" stroke-width="1.700"/><circle cx="40.1" cy="79.5" r="3" stroke-width="1.200" stroke-dasharray="1.100 1.250"/><circle cx="45.2" cy="84.2" r="2.100" stroke-width="1.800"/><circle cx="45.2" cy="84.2" r="3.300" stroke-width="1.300" stroke-dasharray="1.200 1.390"/></g>
<g stroke-width="1.2" fill="none"><path d="M56.200,90.500 V97.800" stroke="#3a48f0"/><path d="M56.200,97.800 L48.100,99.300" stroke="#d83060"/><path d="M56.200,97.800 L59.500,100.700" stroke="#30b070"/></g>
<path d="M60.800,104.200 H68.200 L62.400,108.600 Q62.600,112.600 67.400,110.800" fill="none" stroke="#e87818" stroke-width="1.800" stroke-linejoin="round"/>
<path d="M70.500,119.500 L73.500,118 L77.500,121.500 L79.800,126 L76.800,124.200 L75.500,126.500 L72.500,123.500 Z" fill="#8a90a8"/><path d="M73.500,118 L77.500,121.500 L79.800,126" stroke="#d8d8e0" stroke-width=".7" fill="none"/><circle cx="71.700" cy="121" r="2.300" fill="#38d848"/><circle cx="71.300" cy="120.500" r="1" fill="#b0ffb8"/>
<g stroke-width="1.2" fill="none"><path d="M34.700,130 V137.500" stroke="#3a48f0"/><path d="M34.700,137.500 L26.900,138.600" stroke="#d83048"/><path d="M34.700,137.500 L37.700,140.200" stroke="#50b080"/></g><circle cx="29.300" cy="133.900" r="2.800" fill="#38d840"/><circle cx="28.700" cy="133.100" r="1.200" fill="#b8ffb8"/>
<path d="M37.300,146.500 L40.500,143.400 L48.300,143.400 L48.300,150.300 L45.200,153.500 L37.300,153.500 Z" fill="#3a8cf0"/><path d="M37.300,146.500 L40.500,143.400 L48.300,143.400 L45.200,146.500 Z" fill="#a8d2ff"/><path d="M45.200,146.500 L48.300,143.400 L48.300,150.300 L45.200,153.500 Z" fill="#2a70d8"/><path d="M38,147.300 H41.500 V150 H38Z" fill="#d8ecff" opacity=".8"/>
<path d="M27.400,156 H37.100 L33.800,160 V163.500 H30.800 V160 Z" fill="#a0a0a0"/><path d="M27.400,155.800 H37.100 L36,157.600 H28.600Z" fill="#303030"/><circle cx="34.400" cy="164.400" r="3.800" fill="#28d038"/><path d="M32.500,164.500 L34,166.200 L36.500,162.600" stroke="#fff" stroke-width="1" fill="none"/>
<path d="M27.800,169.200 H34.600 L37.100,171.800 V180.800 H27.800 Z" fill="#f6f2ee"/><path d="M27.800,169.200 H29.300 V180.800 H27.800Z" fill="#d0b8d8"/><path d="M30.500,173.500 H36 M30.500,175.500 H36 M30.500,177.500 H36" stroke="#c8b8b8" stroke-width=".6"/>
</svg>
<div style="left:31px;top:5.1px">Cabine</div>
<div style="left:41.8px;top:18.3px">Rail Reference</div>
<div style="left:52.5px;top:31.7px">Rail</div>
<div style="left:62.9px;top:45.2px">Fanuc M-900iB/700 Base</div>
<div style="left:73.5px;top:58.3px">Fanuc M-900iB/700</div>
<div style="left:84.4px;top:71.8px">BrocheFormage</div>
<div style="left:41.8px;top:85px">Workpiece</div>
<div style="left:52.5px;top:98.4px">Pyramide</div>
<div style="left:41.8px;top:111.6px">Formage Paramètres</div>
<div style="left:41.8px;top:125px">ProgFormage</div></div>
<div id="dlg"><div class="title"><svg width="10" height="10" viewBox="0 0 10 10" style="position:absolute;left:4px;top:3px"><path d="M0.5,0.8H9.5V2H6.2L5.8,3.2V9H4.2V3.2L3.8,2H0.5Z" fill="#333"/><path d="M1.5,2.6H8.5" stroke="#333" stroke-width=".8"/></svg><span style="position:absolute;left:15.7px;top:0.9px">Machining/welding project: Formage Paramètres</span><svg width="60" height="16" viewBox="0 0 60 16" style="position:absolute;left:222px;top:0"><g stroke="#8a8a8a" stroke-width=".8" fill="none"><path d="M5.5,8.5H10.5"/><rect x="29.5" y="5.5" width="5" height="5"/><path d="M53.8,5.8l5,5m0,-5l-5,5"/></g></svg></div>
<div class="t" style="left:7.2px;top:24.3px;">Robot:</div>
<div class="combo" style="left:43.7px;top:23.0px;width:72.9px;height:10.9px;line-height:9.7px;"><span style="position:absolute;left:3px;top:0"><svg width="7" height="8" viewBox="0 0 7 8" style="vertical-align:-1.5px"><path d="M0.5,0.5H5.5L3.5,3Q6,3.5 5.5,6L3,7.5L2,6.3L4,5.5Q4,4.2 1.5,4.2Z" fill="#e86a20"/></svg> <span style="font-size:5.6px">Fanuc M-900iB/700</span></span><span style="position:absolute;right:3px;top:0"><svg class="arw" width="4" height="2.4" viewBox="0 0 5 3"><path d="M0,0H5L2.5,3Z" fill="#222"/></svg></span></div>
<div class="t" style="left:7.2px;top:37.1px;">Reference:</div>
<div class="combo" style="left:43.7px;top:35.1px;width:72.9px;height:10.9px;line-height:9.7px;"><span style="position:absolute;left:3px;top:0"><svg width="8" height="8" viewBox="0 0 8 8" style="vertical-align:-1.5px"><path d="M4.5,0.5V5.5" stroke="#3050ff" stroke-width="1"/><path d="M4.5,5.5L0.5,7.5" stroke="#e02020" stroke-width="1"/><path d="M4.5,5.5L7.5,7" stroke="#888" stroke-width="1"/><circle cx="1.8" cy="2.6" r="1.7" fill="#30c040"/></svg> Workpiece</span><span style="position:absolute;right:3px;top:0"><svg class="arw" width="4" height="2.4" viewBox="0 0 5 3"><path d="M0,0H5L2.5,3Z" fill="#222"/></svg></span></div>
<div class="t" style="left:7.2px;top:48.9px;">Tool:</div>
<div class="combo" style="left:43.7px;top:47.3px;width:72.9px;height:10.9px;line-height:9.7px;"><span style="position:absolute;left:3px;top:0"><svg width="8" height="8" viewBox="0 0 8 8" style="vertical-align:-1.5px"><path d="M1,1L4,0.8L6.5,4.5L7.8,7.8L4.5,6L2,5Z" fill="#9aa0b0"/><circle cx="2" cy="2" r="1.7" fill="#30c040"/></svg> BrocheFormage</span><span style="position:absolute;right:3px;top:0"><svg class="arw" width="4" height="2.4" viewBox="0 0 5 3"><path d="M0,0H5L2.5,3Z" fill="#222"/></svg></span></div>
<div class="t" style="left:7.2px;top:58.9px;">Program:</div>
<div class="t" style="left:43.0px;top:58.9px;">ProgFormage</div>
<div class="inp" style="left:7.2px;top:68.0px;width:7.0px;height:6.8px;border-color:#444"><svg width="6" height="6" viewBox="0 0 6 6" style="position:absolute;left:-.2px;top:-.2px"><path d="M1,3L2.4,4.5L5,1.2" stroke="#222" stroke-width=".9" fill="none"/></svg></div>
<div class="t" style="left:17.2px;top:67.2px;">Visible toolpath</div>
<div class="grp" style="left:7.2px;top:81.0px;width:109.4px;height:52.3px;"></div>
<div class="t" style="left:10.5px;top:76.0px;background:#f0f0f0;padding:0 1.2px">Path input</div>
<div class="combo" style="left:10.8px;top:87.7px;width:51.7px;height:10.6px;line-height:9.4px;"><span style="position:absolute;left:2px;top:0">Select NC file</span><span style="position:absolute;right:3px;top:0"><svg class="arw" width="4" height="2.4" viewBox="0 0 5 3"><path d="M0,0H5L2.5,3Z" fill="#222"/></svg></span></div>
<div class="btn" style="left:65.9px;top:87.7px;width:47.1px;height:10.6px;line-height:9.6px;">Select NC file</div>
<div class="t" style="left:10.8px;top:101.2px;">Path points: 1519</div>
<div class="t" style="left:10.8px;top:108.2px;">Original file: 6.nc</div>
<div class="btn" style="left:11.1px;top:119.0px;width:101.9px;height:10.6px;line-height:9.6px;">Program Events</div>
<div class="t" style="left:149.8px;top:26.2px;">Approach</div>
<div class="btn" style="left:195.0px;top:24.5px;width:42.6px;height:10.9px;line-height:9.9px;">Add</div>
<div class="btn" style="left:240.3px;top:24.5px;width:42.6px;height:10.9px;line-height:9.9px;">Remove</div>
<div class="inp" style="left:148.5px;top:36.6px;width:136.2px;height:41.4px;border-color:#828790"></div>
<div class="ln" style="left:202.3px;top:37.2px;width:0.5px;height:23.4px;"></div>
<div class="ln" style="left:240.3px;top:37.2px;width:0.5px;height:23.4px;"></div>
<div class="ln" style="left:149.1px;top:49.1px;width:91.7px;height:0.5px;"></div>
<div class="ln" style="left:149.1px;top:60.4px;width:91.7px;height:0.5px;"></div>
<div class="t" style="left:175.9px;top:38.9px;transform:translateX(-50%)">mode</div>
<div class="t" style="left:221.5px;top:38.9px;transform:translateX(-50%)">value (mm)</div>
<div class="combo" style="left:149.3px;top:49.9px;width:52.6px;height:10.4px;line-height:9.2px;"><span style="position:absolute;left:1.5px;top:0">normal (n+)</span><span style="position:absolute;right:3px;top:0"><svg class="arw" width="4" height="2.4" viewBox="0 0 5 3"><path d="M0,0H5L2.5,3Z" fill="#222"/></svg></span></div>
<div class="t" style="left:220.9px;top:51.1px;transform:translateX(-50%)">200.0</div>
<div class="t" style="left:149.8px;top:81.2px;">Retract</div>
<div class="btn" style="left:195.0px;top:79.5px;width:42.6px;height:10.9px;line-height:9.9px;">Add</div>
<div class="btn" style="left:240.3px;top:79.5px;width:42.6px;height:10.9px;line-height:9.9px;">Remove</div>
<div class="inp" style="left:148.5px;top:91.6px;width:136.2px;height:42.0px;border-color:#828790"></div>
<div class="ln" style="left:202.3px;top:92.2px;width:0.5px;height:23.4px;"></div>
<div class="ln" style="left:240.3px;top:92.2px;width:0.5px;height:23.4px;"></div>
<div class="ln" style="left:149.1px;top:104.1px;width:91.7px;height:0.5px;"></div>
<div class="ln" style="left:149.1px;top:115.4px;width:91.7px;height:0.5px;"></div>
<div class="t" style="left:175.9px;top:93.9px;transform:translateX(-50%)">mode</div>
<div class="t" style="left:221.5px;top:93.9px;transform:translateX(-50%)">value (mm)</div>
<div class="combo" style="left:149.3px;top:104.9px;width:52.6px;height:10.4px;line-height:9.2px;"><span style="position:absolute;left:1.5px;top:0">normal (n+)</span><span style="position:absolute;right:3px;top:0"><svg class="arw" width="4" height="2.4" viewBox="0 0 5 3"><path d="M0,0H5L2.5,3Z" fill="#222"/></svg></span></div>
<div class="t" style="left:220.9px;top:106.1px;transform:translateX(-50%)">200.0</div>
<div class="t" style="left:5.7px;top:145.0px;">Path to tool offset:</div>
<div class="combo" style="left:58.3px;top:138.5px;width:176.9px;height:10.6px;line-height:9.4px;"><span style="position:absolute;left:2px;top:0"><span class="mono">[X,Y,Z]mm | Rot[X,Y ,Z&nbsp; ]deg - Generic (default)</span></span><span style="position:absolute;right:3px;top:0"><svg class="arw" width="4" height="2.4" viewBox="0 0 5 3"><path d="M0,0H5L2.5,3Z" fill="#222"/></svg></span></div>
<div class="btn" style="left:237.6px;top:138.5px;width:13.7px;height:10.6px;line-height:9.6px;border-color:#d0d0d0;background:#e8e8e8"><svg width="8" height="8" viewBox="0 0 8 8" style="position:absolute;left:2.6px;top:.8px"><rect x="1.5" y="1" width="4" height="5" fill="none" stroke="#c4c4c4" stroke-width=".7"/><rect x="3" y="2.5" width="4" height="5" fill="#e8e8e8" stroke="#c4c4c4" stroke-width=".7"/></svg></div>
<div class="btn" style="left:254.3px;top:138.5px;width:13.7px;height:10.6px;line-height:9.6px;"><svg width="8" height="8" viewBox="0 0 8 8" style="position:absolute;left:2.6px;top:.8px"><path d="M1,1H6V7H1Z" fill="#d8874a"/><path d="M2.6,2.4H7V7.6H2.6Z" fill="#fafafa" stroke="#aaa" stroke-width=".4"/></svg></div>
<div class="btn" style="left:271.0px;top:138.5px;width:13.4px;height:10.6px;line-height:9.6px;"><svg width="8" height="8" viewBox="0 0 8 8" style="position:absolute;left:2.4px;top:.8px"><path d="M1,2H7M1,4.1H7M1,6.2H7" stroke="#111" stroke-width="1"/></svg></div>
<div class="inp" style="left:58.3px;top:150.3px;width:226.4px;height:9.7px;line-height:8px;border-color:#9a9a9a"><span class="mono" style="position:absolute;left:2px;top:0">rotz(0)</span></div>
<div class="t" style="left:5.6px;top:166.0px;">Select algorithm:</div>
<div class="combo" style="left:52.0px;top:165.3px;width:95.6px;height:10.0px;line-height:8.8px;"><span style="position:absolute;left:2px;top:0"><span style="font-size:5.65px">Minimum tool orientation change</span></span><span style="position:absolute;right:3px;top:0"><svg class="arw" width="4" height="2.4" viewBox="0 0 5 3"><path d="M0,0H5L2.5,3Z" fill="#222"/></svg></span></div>
<svg width="9" height="9" viewBox="0 0 9 9" style="position:absolute;left:153.7px;top:165.3px"><path d="M4.5,0.5V8.5M0.5,4.5H8.5" stroke="#1e6fd8" stroke-width="1.7"/></svg>
<div class="btn" style="left:206.0px;top:164.4px;width:78.5px;height:11.2px;line-height:10.2px;"><span style="display:inline-block;width:6px;height:6px;border:1px solid #555;border-radius:50%;background:#fff;vertical-align:-1.3px;margin-right:2px"></span>Show preferred tool path</div>
<div class="grp" style="left:6.2px;top:184.4px;width:278.3px;height:39.6px;"></div>
<div class="t" style="left:10.0px;top:179.4px;background:#f0f0f0;padding:0 1.2px">Optimization parameters</div>
<div class="btn" style="left:12.0px;top:193.1px;width:38.4px;height:10.3px;line-height:9.3px;">Set default</div>
<div class="btn" style="left:200.3px;top:192.8px;width:78.4px;height:11.2px;line-height:10.2px;border-color:#5a9ad6;background:#e5f0fb;box-shadow:inset 0 0 0 .5px #9cc4ea"><span style="display:inline-block;width:6px;height:6px;border:1px solid #555;border-radius:50%;background:#fff;vertical-align:-1.3px;margin-right:2px"></span>Show estimated tool path</div>
<div class="t" style="left:10.8px;top:209.6px;font-size:6.05px">Allow a tool Z rotation of +/-</div>
<div class="inp" style="left:87.4px;top:208.6px;width:31.1px;height:10.0px;line-height:8.8px"><span style="position:absolute;left:1.5px;top:0">0.00</span><span style="position:absolute;right:0;top:0;width:8px;height:100%;background:#f0f0f0;border-left:1px solid #d0d0d0"></span><svg width="4" height="7" viewBox="0 0 4 7" style="position:absolute;right:2px;top:1.2px"><path d="M0,2.6H4L2,0.4Z M0,4.4H4L2,6.6Z" fill="#333"/></svg></div>
<div class="t" style="left:121.9px;top:209.6px;font-size:6.05px">deg by steps of</div>
<div class="inp" style="left:165.2px;top:208.6px;width:31.5px;height:10.0px;line-height:8.8px"><span style="position:absolute;left:1.5px;top:0">&nbsp; 45.00</span><span style="position:absolute;right:0;top:0;width:8px;height:100%;background:#f0f0f0;border-left:1px solid #d0d0d0"></span><svg width="4" height="7" viewBox="0 0 4 7" style="position:absolute;right:2px;top:1.2px"><path d="M0,2.6H4L2,0.4Z M0,4.4H4L2,6.6Z" fill="#333"/></svg></div>
<div class="t" style="left:200.3px;top:209.6px;font-size:6.05px">deg</div>
<div class="grp" style="left:6.2px;top:231.9px;width:278.3px;height:39.7px;"></div>
<div class="t" style="left:10.0px;top:226.6px;background:#f0f0f0;padding:0 1.2px;font-size:6px">Preferred joints for the start point</div>
<div class="inp" style="left:11.7px;top:241.3px;width:38.4px;height:10.0px;line-height:8.8px"><span style="position:absolute;left:1.5px;top:0">88.6839</span><span style="position:absolute;right:0;top:0;width:8px;height:100%;background:#f0f0f0;border-left:1px solid #d0d0d0"></span><svg width="4" height="7" viewBox="0 0 4 7" style="position:absolute;right:2px;top:1.2px"><path d="M0,2.6H4L2,0.4Z M0,4.4H4L2,6.6Z" fill="#333"/></svg></div>
<div class="inp" style="left:52.0px;top:241.3px;width:37.5px;height:10.0px;line-height:8.8px"><span style="position:absolute;left:1.5px;top:0">29.9278</span><span style="position:absolute;right:0;top:0;width:8px;height:100%;background:#f0f0f0;border-left:1px solid #d0d0d0"></span><svg width="4" height="7" viewBox="0 0 4 7" style="position:absolute;right:2px;top:1.2px"><path d="M0,2.6H4L2,0.4Z M0,4.4H4L2,6.6Z" fill="#333"/></svg></div>
<div class="inp" style="left:90.7px;top:241.3px;width:35.7px;height:10.0px;line-height:8.8px"><span style="position:absolute;left:1.5px;top:0">-42.8222</span><span style="position:absolute;right:0;top:0;width:8px;height:100%;background:#f0f0f0;border-left:1px solid #d0d0d0"></span><svg width="4" height="7" viewBox="0 0 4 7" style="position:absolute;right:2px;top:1.2px"><path d="M0,2.6H4L2,0.4Z M0,4.4H4L2,6.6Z" fill="#333"/></svg></div>
<div class="inp" style="left:128.0px;top:241.3px;width:38.7px;height:10.0px;line-height:8.8px"><span style="position:absolute;left:1.5px;top:0">0.8089</span><span style="position:absolute;right:0;top:0;width:8px;height:100%;background:#f0f0f0;border-left:1px solid #d0d0d0"></span><svg width="4" height="7" viewBox="0 0 4 7" style="position:absolute;right:2px;top:1.2px"><path d="M0,2.6H4L2,0.4Z M0,4.4H4L2,6.6Z" fill="#333"/></svg></div>
<div class="inp" style="left:168.2px;top:241.3px;width:38.2px;height:10.0px;line-height:8.8px"><span style="position:absolute;left:1.5px;top:0">-46.4430</span><span style="position:absolute;right:0;top:0;width:8px;height:100%;background:#f0f0f0;border-left:1px solid #d0d0d0"></span><svg width="4" height="7" viewBox="0 0 4 7" style="position:absolute;right:2px;top:1.2px"><path d="M0,2.6H4L2,0.4Z M0,4.4H4L2,6.6Z" fill="#333"/></svg></div>
<div class="inp" style="left:208.2px;top:241.3px;width:39.9px;height:10.0px;line-height:8.8px"><span style="position:absolute;left:1.5px;top:0">90.7587</span><span style="position:absolute;right:0;top:0;width:8px;height:100%;background:#f0f0f0;border-left:1px solid #d0d0d0"></span><svg width="4" height="7" viewBox="0 0 4 7" style="position:absolute;right:2px;top:1.2px"><path d="M0,2.6H4L2,0.4Z M0,4.4H4L2,6.6Z" fill="#333"/></svg></div>
<div class="btn" style="left:250.3px;top:241.3px;width:13.6px;height:10.0px;line-height:9.0px;border-color:#d0d0d0;background:#e8e8e8"><svg width="8" height="8" viewBox="0 0 8 8" style="position:absolute;left:2.6px;top:.5px"><rect x="1.5" y="1" width="4" height="5" fill="none" stroke="#c4c4c4" stroke-width=".7"/><rect x="3" y="2.5" width="4" height="5" fill="#e8e8e8" stroke="#c4c4c4" stroke-width=".7"/></svg></div>
<div class="btn" style="left:265.4px;top:241.3px;width:13.6px;height:10.0px;line-height:9.0px;"><svg width="8" height="8" viewBox="0 0 8 8" style="position:absolute;left:2.6px;top:.5px"><path d="M1,1H6V7H1Z" fill="#d8874a"/><path d="M2.6,2.4H7V7.6H2.6Z" fill="#fafafa" stroke="#aaa" stroke-width=".4"/></svg></div>
<div class="btn" style="left:12.0px;top:256.7px;width:38.4px;height:10.0px;line-height:9.0px;">Set default</div>
<div class="combo" style="left:51.3px;top:256.7px;width:228.3px;height:10.0px;line-height:8.8px;"><span style="position:absolute;left:2px;top:0"><span class="mono" style="white-space:pre;font-size:5.3px">     90.17,      36.73,     -39.03,       0.79,     -50.25,      89</span></span><span style="position:absolute;right:3px;top:0"><svg class="arw" width="4" height="2.4" viewBox="0 0 5 3"><path d="M0,0H5L2.5,3Z" fill="#222"/></svg></span></div>
<div class="inp" style="left:6.2px;top:277.6px;width:6.6px;height:6.7px;border-color:#444"></div>
<div class="t" style="left:15.3px;top:276.9px;">auto update</div>
<div class="t" style="left:5.6px;top:291.4px;">Path solved successfully.</div>
<svg width="26" height="26" viewBox="0 0 26 26" style="position:absolute;left:171.9px;top:275.5px"><defs><radialGradient id="gck" cx=".4" cy=".3" r=".8"><stop offset="0" stop-color="#7af27a"/><stop offset=".6" stop-color="#1fd03a"/><stop offset="1" stop-color="#0fa828"/></radialGradient></defs><circle cx="13" cy="13" r="12.2" fill="url(#gck)"/><path d="M6.5,12.5Q9.5,15 11,19.5Q14,11 20,5.5" stroke="#fff" stroke-width="3" fill="none" stroke-linecap="round" stroke-linejoin="round"/></svg>
<div class="btn" style="left:202.1px;top:276.7px;width:39.1px;height:24.5px;line-height:23.5px;border-color:#3c8ad8;background:#e5f1fb;box-shadow:inset 0 0 0 .6px #7ab4e8">Update</div>
<div class="btn" style="left:245.4px;top:277.3px;width:39.1px;height:23.7px;line-height:22.7px;">Simulate</div>
<svg width="8" height="12" viewBox="0 0 8 12" style="position:absolute;left:259.5px;top:294.0px"><path d="M0.5,0.5V9.5L2.7,7.5L4.2,11L5.6,10.4L4.1,7H7Z" fill="#fff" stroke="#111" stroke-width=".7"/></svg></div>
</div>
<div id="status">Done updating ProgFormage</div>
</body>
</html>
